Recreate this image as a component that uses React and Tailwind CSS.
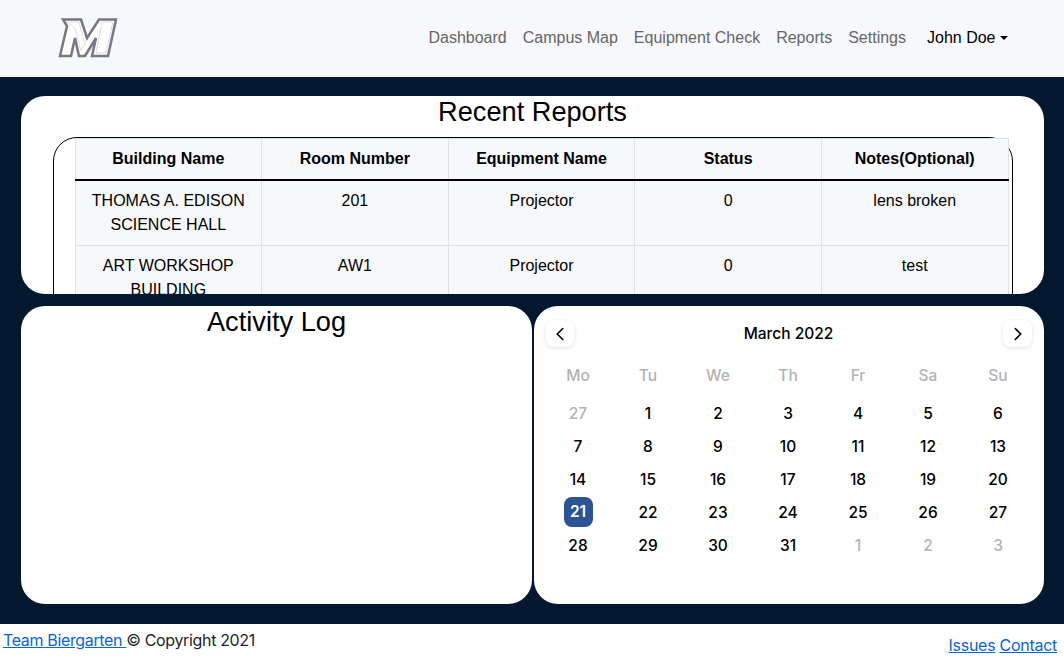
import React from "react";
import { ChevronLeft, ChevronRight } from "lucide-react";

const navLinks = ["Dashboard", "Campus Map", "Equipment Check", "Reports", "Settings"];
const columns = ["Building Name", "Room Number", "Equipment Name", "Status", "Notes(Optional)"];
const reports = [
  ["THOMAS A. EDISON SCIENCE HALL", "201", "Projector", "0", "lens broken"],
  ["ART WORKSHOP BUILDING", "AW1", "Projector", "0", "test"],
];
const weekdays = ["Mo", "Tu", "We", "Th", "Fr", "Sa", "Su"];

const days = [
  { n: 27, off: true },
  ...Array.from({ length: 31 }, (_, i) => ({ n: i + 1 })),
  { n: 1, off: true },
  { n: 2, off: true },
  { n: 3, off: true },
];

const Logo = () => (
  <svg width="60" height="42" viewBox="0 0 60 42" className="block blur-[0.4px]">
    <path
      d="M5 2.5 H23 L29 21 L41 2.5 H58 L50 39 H34 L38 21 L27 39 H21 L17 21 L13 39 H2 L9 9 Z"
      fill="#ffffff"
      stroke="#777785"
      strokeWidth="2.5"
      strokeLinejoin="miter"
    />
    <path d="M9 5 H21 L27 27 L23 34 L17 11 Z" fill="#ffffff" stroke="#dcdce3" strokeWidth="1" />
    <path d="M44 5 H55 L48 36 H38 Z" fill="#ffffff" stroke="#dcdce3" strokeWidth="1" />
  </svg>
);

const App = () => {
  return (
    <div className="h-[660px] w-[1064px] overflow-hidden bg-white font-['Liberation_Sans',Arial,sans-serif] text-[16px] text-[#212529]">
      <nav className="flex h-[77px] items-center bg-[#f7f8fb] pb-[2px] pl-[58px] pr-[48.5px]">
        <Logo />
        <div className="ml-auto flex items-center">
          {navLinks.map((link) => (
            <a key={link} className="px-2 leading-6 text-[#666666]">
              {link}
            </a>
          ))}
          <a className="ml-[5px] flex items-center px-2 leading-6 text-black">
            John Doe
            <span className="ml-1 h-0 w-0 border-x-[4.8px] border-t-[4.8px] border-x-transparent border-t-black" />
          </a>
        </div>
      </nav>

      <main className="flex h-[547px] flex-col gap-3 bg-[#03182e] pb-5 pl-[21px] pr-[20px] pt-[19px]">
        <section className="h-[198px] shrink-0 overflow-hidden rounded-3xl bg-white">
          <h3 className="-mt-px text-center text-[27.2px] leading-[33.6px] text-black">Recent Reports</h3>
          <div className="ml-[32px] mr-[31px] mt-[8px] h-[300px] rounded-3xl border border-black pl-[20.5px] pr-[3px]">
            <table className="w-[934px] table-fixed border-collapse bg-[#f7f8fb] text-center text-black">
              <thead>
                <tr>
                  {columns.map((col) => (
                    <th key={col} className="border border-b-2 border-[#dee2e6] border-b-black p-2 font-bold leading-6">
                      {col}
                    </th>
                  ))}
                </tr>
              </thead>
              <tbody>
                {reports.map((row) => (
                  <tr key={row[0]}>
                    {row.map((cell, i) => (
                      <td key={i} className="border border-[#dee2e6] p-2 align-top leading-6">
                        {cell}
                      </td>
                    ))}
                  </tr>
                ))}
              </tbody>
            </table>
          </div>
        </section>

        <div className="flex h-[298px] gap-[2px]">
          <section className="w-[511px] rounded-3xl bg-white">
            <h3 className="-mt-px text-center text-[27.2px] leading-[33.6px] text-black">Activity Log</h3>
          </section>

          <section className="flex-1 rounded-3xl bg-white pl-[9px] pr-[11px] pt-[14px] font-['Inter',sans-serif] text-[15.5px] font-medium text-black">
            <div className="-mr-[2px] flex h-[27px] items-center justify-between px-[3px]">
              <button className="flex h-[27px] w-[28px] items-center justify-center rounded-lg bg-white shadow-[0_1px_4px_rgba(0,0,0,0.12)]">
                <ChevronLeft size={22} strokeWidth={1.75} />
              </button>
              <span className="mt-px">March 2022</span>
              <button className="flex h-[27px] w-[29px] items-center justify-center rounded-lg bg-white shadow-[0_1px_4px_rgba(0,0,0,0.12)]">
                <ChevronRight size={22} strokeWidth={1.75} />
              </button>
            </div>
            <div className="mt-[15px] grid grid-cols-7 text-center">
              {weekdays.map((d) => (
                <span key={d} className="h-[27px] leading-[27px] text-[#b3b3b3]">
                  {d}
                </span>
              ))}
            </div>
            <div className="mt-[8px] grid grid-cols-7 text-center">
              {days.map((d, i) => (
                <div key={i} className="flex h-[33px] items-center justify-center">
                  <span
                    className={
                      d.n === 21 && !d.off
                        ? "-mt-px flex h-[30px] w-[29px] items-center justify-center rounded-lg bg-[#2c5494] font-semibold text-white"
                        : d.off
                        ? "text-[#b3b3b3]"
                        : "text-black"
                    }
                  >
                    {d.n}
                  </span>
                </div>
              ))}
            </div>
          </section>
        </div>
      </main>

      <footer className="flex h-9 justify-between pl-[3px] pr-[7px] font-['Inter',sans-serif] tracking-[-0.35px] text-[#212529]">
        <span className="mt-1 leading-6">
          <a className="text-[#0b63d8] underline">Team Biergarten </a>© Copyright 2021
        </span>
        <span className="mt-[9px] leading-6 tracking-[-0.28px]">
          <a className="text-[#0b63d8] underline">Issues</a> <a className="text-[#0b63d8] underline">Contact</a>
        </span>
      </footer>
    </div>
  );
};

export default App;
